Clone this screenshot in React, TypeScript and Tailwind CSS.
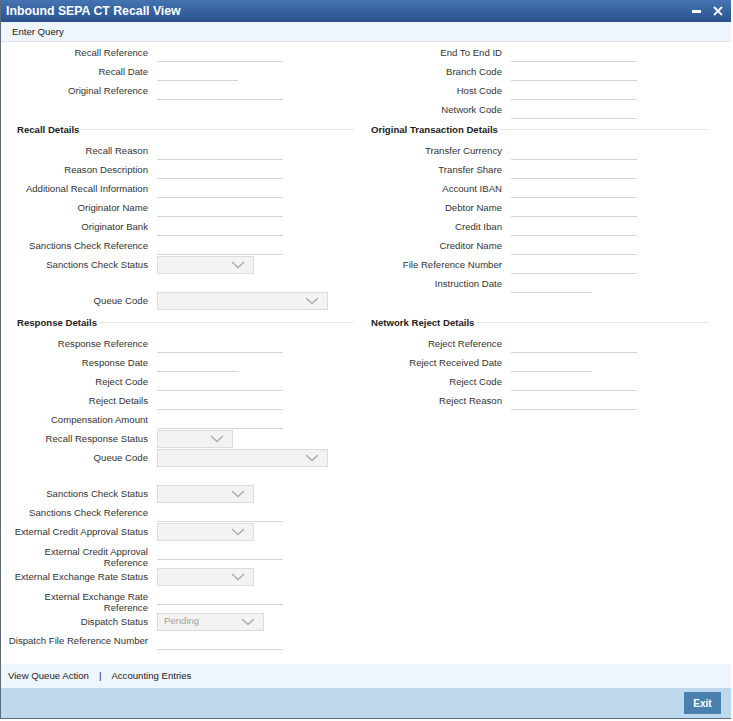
import React from "react";

type Field = {
  label: string;
  kind?: "text" | "date" | "select";
  selW?: number;
  value?: string;
  twoLine?: boolean;
  gapBefore?: boolean;
};

function Chevron() {
  return (
    <svg width="14" height="8" viewBox="0 0 14 8" className="shrink-0">
      <path d="M1 1 L7 6.5 L13 1" fill="none" stroke="#a9a9a9" strokeWidth="1.3" />
    </svg>
  );
}

function Row({ f }: { f: Field }) {
  const kind = f.kind ?? "text";
  return (
    <div className={`flex ${f.twoLine ? "h-[26px] items-start" : "h-[19px] items-center"} ${f.gapBefore ? "mt-[17px]" : ""}`}>
      <div
        className={`w-[147px] shrink-0 text-right text-[#333] leading-[11px] ${f.twoLine ? "pt-[5px]" : ""}`}
      >
        {f.label}
      </div>
      <div className="ml-[9px]">
        {kind === "text" && <div className="w-[126px] h-[19px] border-b border-[#d4d4d4]" />}
        {kind === "date" && <div className="w-[81px] h-[19px] border-b border-[#d4d4d4]" />}
        {kind === "select" && (
          <div
            className="h-[18px] bg-[#f4f3f1] border border-[#dcdcdc] flex items-center justify-between pl-[6px] pr-[8px] text-[#a0a0a0]"
            style={{ width: f.selW ?? 96 }}
          >
            <span>{f.value ?? ""}</span>
            <Chevron />
          </div>
        )}
      </div>
    </div>
  );
}

function Header({ title }: { title: string }) {
  return (
    <div className="flex items-center h-[14px] pl-[16px] pr-[1px]">
      <span className="font-bold text-[#222] whitespace-nowrap">{title}</span>
      <div className="flex-1 ml-[2px] border-t border-[#e6e6e6] -mt-[2px]" />
    </div>
  );
}

function Col({ fields }: { fields: Field[] }) {
  return (
    <div className="flex flex-col">
      {fields.map((f, i) => (
        <Row key={i} f={f} />
      ))}
    </div>
  );
}

const topLeft: Field[] = [
  { label: "Recall Reference" },
  { label: "Recall Date", kind: "date" },
  { label: "Original Reference" },
];
const topRight: Field[] = [
  { label: "End To End ID" },
  { label: "Branch Code" },
  { label: "Host Code" },
  { label: "Network Code" },
];
const recallDetails: Field[] = [
  { label: "Recall Reason" },
  { label: "Reason Description" },
  { label: "Additional Recall Information" },
  { label: "Originator Name" },
  { label: "Originator Bank" },
  { label: "Sanctions Check Reference" },
  { label: "Sanctions Check Status", kind: "select", selW: 97 },
  { label: "Queue Code", kind: "select", selW: 171, gapBefore: true },
];
const origTxn: Field[] = [
  { label: "Transfer Currency" },
  { label: "Transfer Share" },
  { label: "Account IBAN" },
  { label: "Debtor Name" },
  { label: "Credit Iban" },
  { label: "Creditor Name" },
  { label: "File Reference Number" },
  { label: "Instruction Date", kind: "date" },
];
const responseDetails: Field[] = [
  { label: "Response Reference" },
  { label: "Response Date", kind: "date" },
  { label: "Reject Code" },
  { label: "Reject Details" },
  { label: "Compensation Amount" },
  { label: "Recall Response Status", kind: "select", selW: 76 },
  { label: "Queue Code", kind: "select", selW: 171 },
  { label: "Sanctions Check Status", kind: "select", selW: 97, gapBefore: true },
  { label: "Sanctions Check Reference" },
  { label: "External Credit Approval Status", kind: "select", selW: 97 },
  { label: "External Credit Approval Reference", twoLine: true },
  { label: "External Exchange Rate Status", kind: "select", selW: 97 },
  { label: "External Exchange Rate Reference", twoLine: true },
  { label: "Dispatch Status", kind: "select", selW: 107, value: "Pending" },
  { label: "Dispatch File Reference Number" },
];
const networkReject: Field[] = [
  { label: "Reject Reference" },
  { label: "Reject Received Date", kind: "date" },
  { label: "Reject Code" },
  { label: "Reject Reason" },
];

export default function App() {
  return (
    <div
      className="w-[733px] h-[721px] bg-white flex flex-col text-[9.6px] overflow-hidden"
      style={{ fontFamily: '"Liberation Sans", Arial, sans-serif' }}
    >
      <div className="w-[731px] h-[719px] flex flex-col border-l border-b border-[#5c6b7a]">
        {/* title bar */}
        <div className="h-[22px] shrink-0 flex items-center justify-between pl-[5px] pr-[8px] bg-gradient-to-b from-[#4574b2] to-[#28528e]">
          <span className="text-white font-bold text-[12.3px]">Inbound SEPA CT Recall View</span>
          <div className="flex items-center gap-[12px]">
            <div className="w-[9px] h-[3px] bg-white mt-[1px]" />
            <svg width="10" height="10" viewBox="0 0 10 10">
              <path d="M1 1 L9 9 M9 1 L1 9" stroke="white" strokeWidth="1.8" />
            </svg>
          </div>
        </div>

        {/* toolbar */}
        <div className="h-[20px] shrink-0 bg-[#eef5fd] border-b border-[#dde4ec] flex items-center pl-[11px] pt-[2px]">
          <span className="text-[#222]">Enter Query</span>
        </div>

        {/* body */}
        <div className="flex-1 flex flex-col pt-[1px]">
          <div className="flex">
            <div className="w-[354px]">
              <Col fields={topLeft} />
            </div>
            <div className="w-[354px]">
              <Col fields={topRight} />
            </div>
          </div>

          <div className="flex mt-[4px]">
            <div className="w-[354px] flex flex-col">
              <Header title="Recall Details" />
              <div className="mt-[4px]">
                <Col fields={recallDetails} />
              </div>
            </div>
            <div className="w-[354px] flex flex-col">
              <Header title="Original Transaction Details" />
              <div className="mt-[4px]">
                <Col fields={origTxn} />
              </div>
            </div>
          </div>

          <div className="flex mt-[6px]">
            <div className="w-[354px] flex flex-col">
              <Header title="Response Details" />
              <div className="mt-[4px]">
                <Col fields={responseDetails} />
              </div>
            </div>
            <div className="w-[354px] flex flex-col">
              <Header title="Network Reject Details" />
              <div className="mt-[4px]">
                <Col fields={networkReject} />
              </div>
            </div>
          </div>
        </div>

        {/* footer links */}
        <div className="h-[24px] shrink-0 bg-[#eef5fd] flex items-center pl-[7px] text-[#222]">
          <span>View Queue Action</span>
          <span className="mx-[10px]">|</span>
          <span>Accounting Entries</span>
        </div>

        {/* action bar */}
        <div className="h-[30px] shrink-0 bg-[#bed9ed] flex items-center justify-end pr-[10px]">
          <button className="w-[37px] h-[22px] bg-[#4a80b0] text-white font-bold text-[10px]">Exit</button>
        </div>
      </div>
    </div>
  );
}
